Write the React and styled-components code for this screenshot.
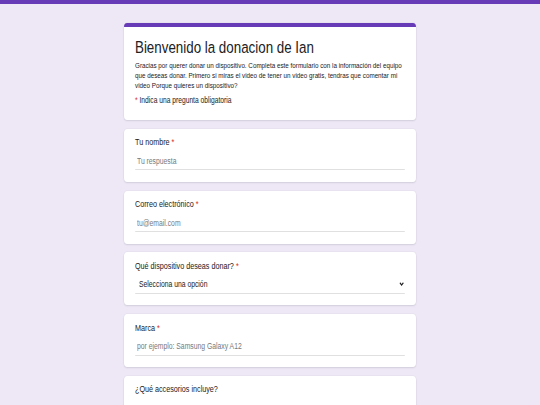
import React from "react";
import styled, { createGlobalStyle } from "styled-components";

const GlobalStyle = createGlobalStyle`
  html, body {
    margin: 0;
    padding: 0;
    overflow: hidden;
    background: #ede7f6;
  }
  body {
    font-family: "Liberation Sans", Arial, sans-serif;
    color: #202124;
  }
`;

const Stage = styled.div`
  width: 675px;
  min-height: 405px;
  background: #ede7f6;
  transform: scaleX(0.8);
  transform-origin: 0 0;
`;

const TopBar = styled.div`
  height: 3.5px;
  background: #673ab7;
`;

const Form = styled.main`
  width: 365px;
  margin: 19.5px auto 0;
  display: flex;
  flex-direction: column;
  gap: 8.8px;
`;

const Card = styled.section`
  background: #ffffff;
  border-radius: 4px;
  box-shadow: 0 1px 2px rgba(60, 64, 67, 0.12), 0 0 0 0.5px rgba(60, 64, 67, 0.06);
  padding: 7.5px 13.75px 11.4px;
`;

const HeaderCard = styled(Card)`
  border-top: 4px solid #673ab7;
  padding: 10.5px 13.75px 14.2px;
`;

const Title = styled.h1`
  margin: 0 0 3.5px;
  font-size: 16.7px;
  line-height: 20px;
  font-weight: 400;
  color: #202124;
`;

const Description = styled.p`
  margin: 0;
  font-size: 7.85px;
  line-height: 10px;
  color: #202124;
`;

const RequiredNote = styled.p`
  margin: 3px 0 0;
  font-size: 8.4px;
  line-height: 12px;
  color: #202124;
`;

const Star = styled.span`
  color: #d93025;
`;

const Label = styled.label`
  display: block;
  font-size: 9px;
  line-height: 12px;
  margin-bottom: 4px;
  color: #202124;
`;

const TextInput = styled.input`
  display: block;
  width: 100%;
  box-sizing: border-box;
  height: 18px;
  margin: 0;
  padding: 0 2.5px;
  border: none;
  border-bottom: 1px solid #e0e0e0;
  background: transparent;
  font-family: inherit;
  font-size: 8.5px;
  color: #202124;
  outline: none;
  &::placeholder {
    color: #75797d;
    opacity: 1;
  }
`;

const SelectBox = styled.div`
  display: flex;
  align-items: center;
  justify-content: space-between;
  box-sizing: border-box;
  height: 18px;
  padding: 0 1px 0 5px;
  border-bottom: 1px solid #e0e0e0;
  font-size: 8.5px;
  color: #202124;
`;

const Chevron = () => (
  <svg width="6" height="4" viewBox="0 0 6 4" aria-hidden="true">
    <path d="M0.8 0.8 L3 3 L5.2 0.8" fill="none" stroke="#202124" strokeWidth="1.3" />
  </svg>
);

const Question = ({ label, required, placeholder, type = "text" }) => (
  <Card>
    <Label>
      {label}
      {required && <Star> *</Star>}
    </Label>
    <TextInput type={type} placeholder={placeholder} />
  </Card>
);

export default function App() {
  return (
    <>
      <GlobalStyle />
      <Stage>
        <TopBar />
        <Form>
          <HeaderCard>
            <Title>Bienvenido la donacion de Ian</Title>
            <Description>
              Gracias por querer donar un dispositivo. Completa este formulario con la información del
              equipo que deseas donar. Primero si miras el video de tener un video gratis, tendras que
              comentar mi video Porque quieres un dispositivo?
            </Description>
            <RequiredNote>
              <Star>*</Star> Indica una pregunta obligatoria
            </RequiredNote>
          </HeaderCard>

          <Question label="Tu nombre" required placeholder="Tu respuesta" />
          <Question label="Correo electrónico" required type="email" placeholder="tu@email.com" />

          <Card>
            <Label>
              Qué dispositivo deseas donar?<Star> *</Star>
            </Label>
            <SelectBox>
              <span>Selecciona una opción</span>
              <Chevron />
            </SelectBox>
          </Card>

          <Question label="Marca" required placeholder="por ejemplo: Samsung Galaxy A12" />
          <Question label="¿Qué accesorios incluye?" placeholder="Tu respuesta" />
        </Form>
      </Stage>
    </>
  );
}
